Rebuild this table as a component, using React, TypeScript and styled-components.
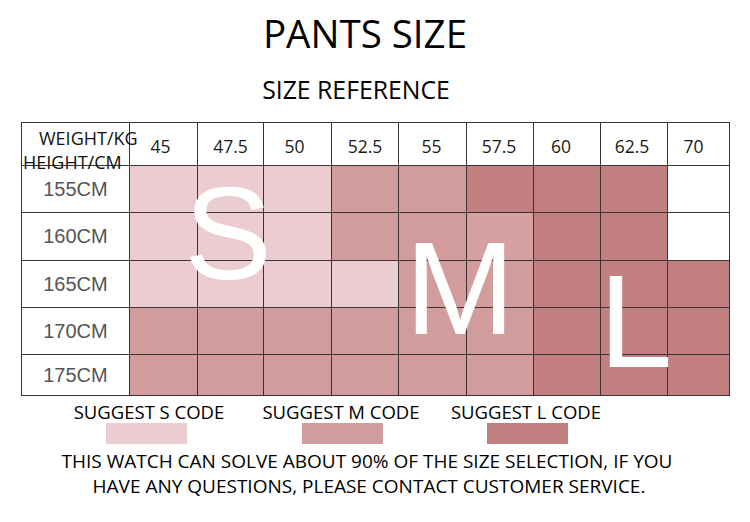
import React from "react";
import styled, { createGlobalStyle } from "styled-components";

const GlobalStyle = createGlobalStyle`
  html, body { margin: 0; padding: 0; background: #ffffff; }
  #root { width: 750px; height: 522px; }
`;

type Size = "S" | "M" | "M2" | "L" | "W";

const COLORS: Record<Size, string> = {
  S: "#ebcdd1",
  M: "#d29c9d",
  M2: "#d5a0a0",
  L: "#c17f80",
  W: "#ffffff",
};

const weights: { w: string; dx: number }[] = [
  { w: "45", dx: -3 },
  { w: "47.5", dx: 0 },
  { w: "50", dx: -3 },
  { w: "52.5", dx: 0 },
  { w: "55", dx: -1 },
  { w: "57.5", dx: -1 },
  { w: "60", dx: -6 },
  { w: "62.5", dx: -2 },
  { w: "70", dx: -5 },
];

const rows: { h: string; cells: Size[] }[] = [
  { h: "155CM", cells: ["S", "S", "S", "M", "M", "L", "L", "L", "W"] },
  { h: "160CM", cells: ["S", "S", "S", "M", "M", "M2", "L", "L", "W"] },
  { h: "165CM", cells: ["S", "S", "S", "S", "M", "M", "L", "L", "L"] },
  { h: "170CM", cells: ["M", "M", "M", "M", "M", "M", "L", "L", "L"] },
  { h: "175CM", cells: ["M", "M", "M", "M", "M", "M", "L", "L", "L"] },
];

const Page = styled.div`
  width: 750px;
  height: 522px;
  display: flex;
  flex-direction: column;
  font-family: "Open Sans", "Noto Sans", sans-serif;
  color: #111;
  overflow: hidden;
`;

const Title = styled.h1`
  margin: 0;
  padding: 11px 20px 0 0;
  height: 52px;
  box-sizing: border-box;
  text-align: center;
  font-size: 38.5px;
  line-height: 44px;
  font-weight: 400;
  color: #000;
`;

const Subtitle = styled.h2`
  margin: 0;
  padding: 20px 38px 0 0;
  height: 70px;
  box-sizing: border-box;
  text-align: center;
  font-size: 24.8px;
  line-height: 34px;
  font-weight: 400;
  color: #000;
`;

const TableWrap = styled.div`
  position: relative;
  margin-left: 21px;
  width: 709px;
`;

const Grid = styled.div`
  display: grid;
  grid-template-columns: 107px 67px 65px 67px 66px 67px 66px 66px 66px 61px;
  grid-template-rows: 42px 46px 47px 46px 46px 40px;
  gap: 1px;
  padding: 1px;
  background: #3a3134;
  width: max-content;
`;

const Cell = styled.div<{ $bg: string }>`
  background: ${(p) => p.$bg};
`;

const Corner = styled.div`
  position: relative;
  z-index: 2;
  background: #ffffff;
  display: flex;
  flex-direction: column;
  font-size: 18px;
  line-height: 21px;
  color: #111;
  white-space: nowrap;
`;

const CornerTop = styled.span`
  padding: 5px 0 0 17px;
`;

const CornerBottom = styled.span`
  padding: 0 0 0 1px;
  margin-top: 3px;
`;

const WeightCell = styled.div<{ $dx: number }>`
  background: #ffffff;
  display: flex;
  align-items: center;
  justify-content: center;
  padding-top: 4px;
  padding-right: ${(p) => Math.max(0, -p.$dx * 2)}px;
  box-sizing: border-box;
  font-size: 17.5px;
  color: #1a1a1a;
`;

const HeightCell = styled.div`
  background: #ffffff;
  display: flex;
  align-items: center;
  justify-content: center;
  font-family: "Liberation Sans", Arial, sans-serif;
  font-size: 20px;
  color: #555555;
`;

const BigLetter = styled.span<{ $x: number; $y: number }>`
  position: absolute;
  left: ${(p) => p.$x}px;
  top: ${(p) => p.$y}px;
  font-family: "Liberation Sans", Arial, sans-serif;
  font-size: 132px;
  line-height: 1;
  color: #ffffff;
  pointer-events: none;
  z-index: 3;
`;

const Legend = styled.div`
  display: grid;
  grid-template-columns: 192px 185px 160px;
  padding: 5px 0 0 69px;
  height: 52px;
  box-sizing: border-box;
`;

const LegendItem = styled.div`
  width: 160px;
  display: flex;
  flex-direction: column;
  align-items: center;
`;

const LegendLabel = styled.span`
  font-size: 18.5px;
  line-height: 22px;
  color: #000;
  white-space: nowrap;
`;

const Swatch = styled.span<{ $bg: string; $dx: number }>`
  display: block;
  width: 81px;
  height: 21px;
  margin-left: ${(p) => p.$dx}px;
  background: ${(p) => p.$bg};
`;

const Note = styled.p`
  margin: 0;
  padding: 1px 12px 0 0;
  text-align: center;
  font-size: 19px;
  line-height: 25px;
  color: #000;
`;

const NoteLine = styled.span<{ $shift?: number }>`
  display: block;
  padding-right: ${(p) => p.$shift || 0}px;
`;

export default function App() {
  return (
    <Page>
      <GlobalStyle />
      <Title>PANTS SIZE</Title>
      <Subtitle>SIZE REFERENCE</Subtitle>
      <TableWrap>
        <Grid>
          <Corner>
            <CornerTop>WEIGHT/KG</CornerTop>
            <CornerBottom>HEIGHT/CM</CornerBottom>
          </Corner>
          {weights.map(({ w, dx }) => (
            <WeightCell key={w} $dx={dx}>
              {w}
            </WeightCell>
          ))}
          {rows.map((r) => (
            <React.Fragment key={r.h}>
              <HeightCell>{r.h}</HeightCell>
              {r.cells.map((c, i) => (
                <Cell key={i} $bg={COLORS[c]} />
              ))}
            </React.Fragment>
          ))}
        </Grid>
        <BigLetter $x={163} $y={46}>S</BigLetter>
        <BigLetter $x={384} $y={101}>M</BigLetter>
        <BigLetter $x={578} $y={134}>L</BigLetter>
      </TableWrap>
      <Legend>
        <LegendItem>
          <LegendLabel>SUGGEST S CODE</LegendLabel>
          <Swatch $bg={COLORS.S} $dx={-6} />
        </LegendItem>
        <LegendItem>
          <LegendLabel>SUGGEST M CODE</LegendLabel>
          <Swatch $bg={COLORS.M} $dx={2} />
        </LegendItem>
        <LegendItem>
          <LegendLabel>SUGGEST L CODE</LegendLabel>
          <Swatch $bg={COLORS.L} $dx={2} />
        </LegendItem>
      </Legend>
      <Note>
        <NoteLine $shift={4}>THIS WATCH CAN SOLVE ABOUT 90% OF THE SIZE SELECTION, IF YOU</NoteLine>
        <NoteLine>HAVE ANY QUESTIONS, PLEASE CONTACT CUSTOMER SERVICE.</NoteLine>
      </Note>
    </Page>
  );
}
